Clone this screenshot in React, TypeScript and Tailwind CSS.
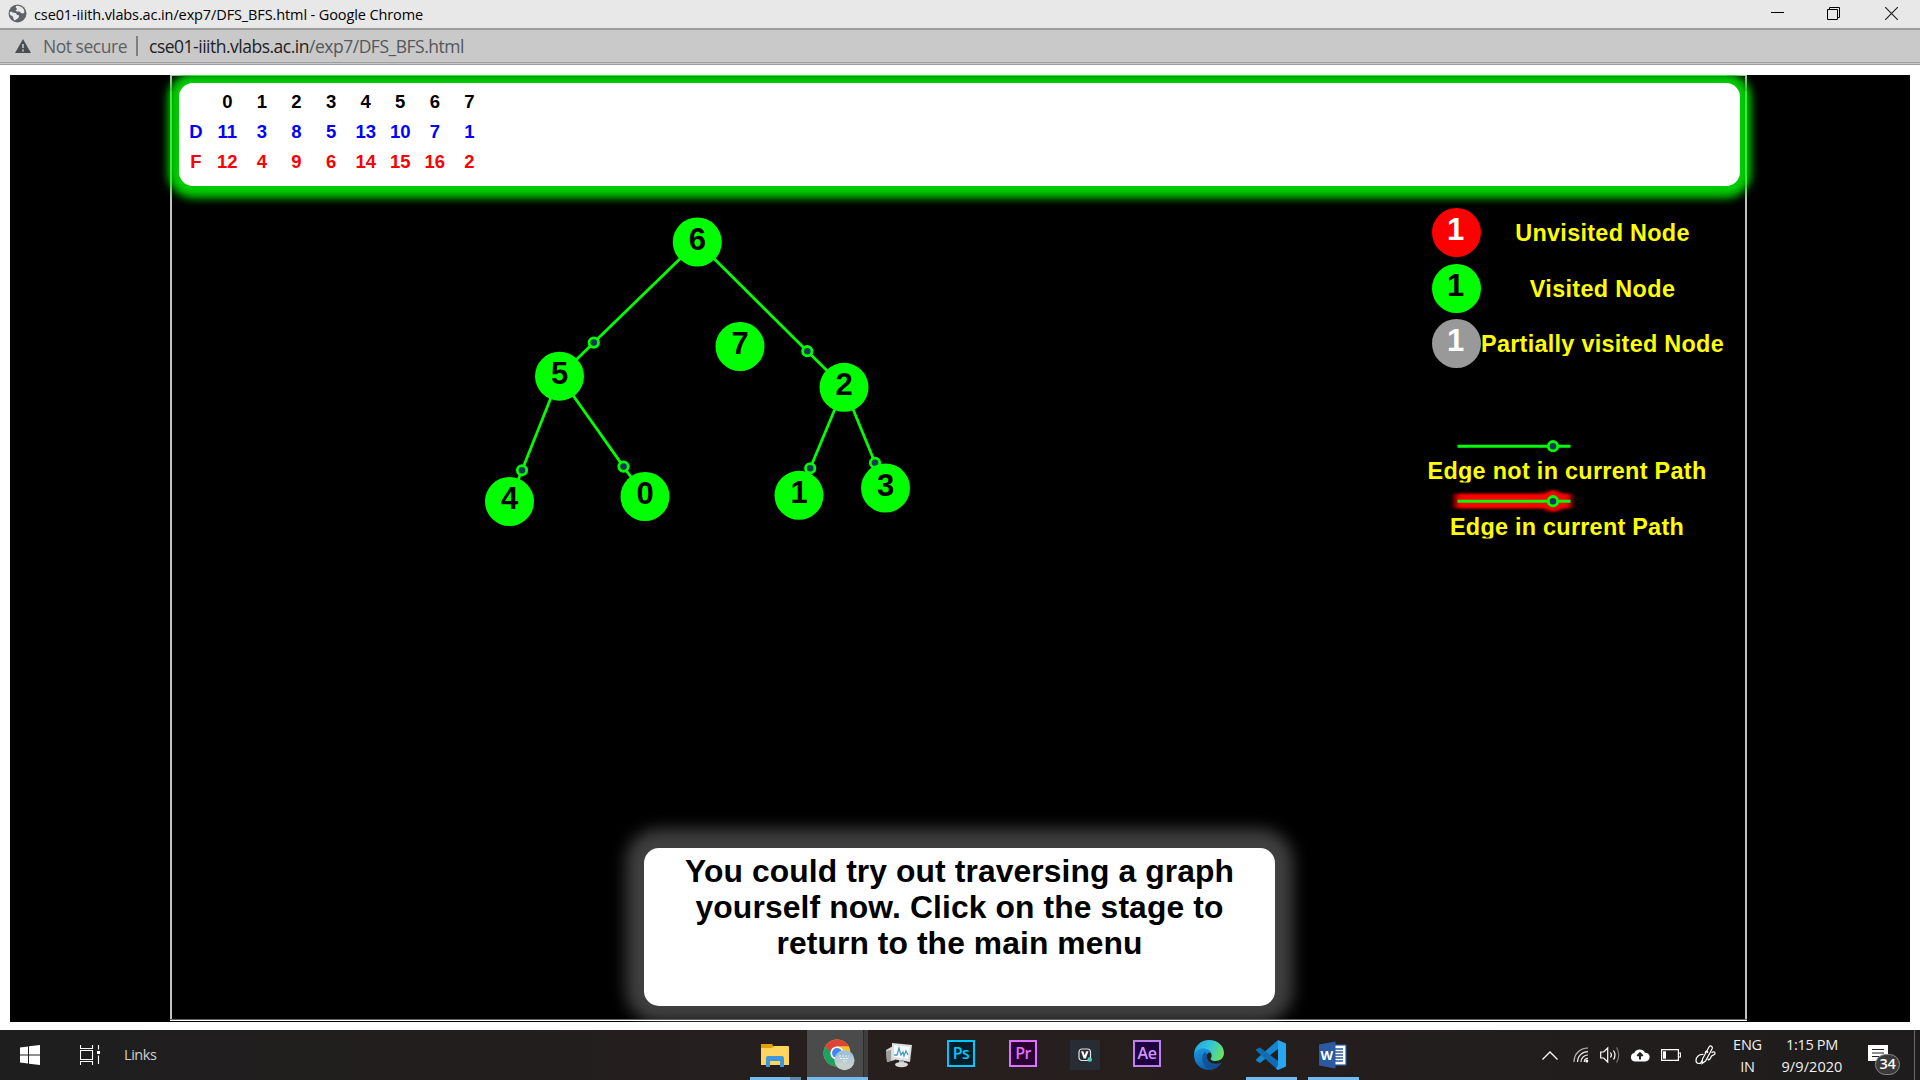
import { useLayoutEffect, useRef, useState, type ReactNode } from "react";

/* Text set to a fixed advance width by adjusting its tracking. */
function Fit({ w, className = "", children }: { w: number; className?: string; children: ReactNode }) {
  const ref = useRef<HTMLSpanElement>(null);
  const [ls, setLs] = useState(0);
  useLayoutEffect(() => {
    const el = ref.current;
    if (!el) return;
    const n = (el.textContent || "").length;
    setLs((w - el.getBoundingClientRect().width) / n);
  }, [w]);
  return (
    <span ref={ref} className={`inline-block whitespace-pre ${className}`} style={{ letterSpacing: `${ls}px` }}>
      {children}
    </span>
  );
}

const SEGOE = "font-['Open_Sans',sans-serif]";
const ARIAL = "font-['Liberation_Sans',Arial,sans-serif]";

const nodes = [
  { id: "6", x: 697.3, y: 242 },
  { id: "5", x: 559.5, y: 376.2 },
  { id: "7", x: 740, y: 346.5 },
  { id: "2", x: 844, y: 387.3 },
  { id: "4", x: 509.5, y: 501.5 },
  { id: "0", x: 645, y: 496.5 },
  { id: "1", x: 799, y: 495.3 },
  { id: "3", x: 885.5, y: 488 },
];
const edges = [
  { a: "6", b: "5", kx: 593.8, ky: 342.6 },
  { a: "6", b: "2", kx: 807.3, ky: 351.2 },
  { a: "5", b: "4", kx: 522, ky: 470.3 },
  { a: "5", b: "0", kx: 623.5, ky: 466.6 },
  { a: "2", b: "1", kx: 810.2, ky: 468.3 },
  { a: "2", b: "3", kx: 875, ky: 462.8 },
];
const byId = (id: string) => nodes.find((n) => n.id === id)!;

function Graph() {
  return (
    <svg className="block" width="440" height="320" viewBox="470 210 440 320">
      {edges.map((e) => (
        <g key={e.a + e.b} stroke="#00ff00">
          <line x1={byId(e.a).x} y1={byId(e.a).y} x2={e.kx} y2={e.ky} strokeWidth="2.8" />
          <line x1={e.kx} y1={e.ky} x2={byId(e.b).x} y2={byId(e.b).y} strokeWidth="2.8" />
          <circle cx={e.kx} cy={e.ky} r="4.7" fill="#123a56" strokeWidth="2.8" />
        </g>
      ))}
      {nodes.map((n) => (
        <g key={n.id}>
          <circle cx={n.x} cy={n.y} r="24.5" fill="#00ff00" />
          <text x={n.x} y={n.y + 7.7} textAnchor="middle" fontSize="31" fontWeight="700" fontFamily="Liberation Sans, Arial, sans-serif">
            {n.id}
          </text>
        </g>
      ))}
    </svg>
  );
}

function EdgeKey({ glow }: { glow?: boolean }) {
  return (
    <svg className="block" width="140" height="28" viewBox="0 0 140 28">
      {glow && (
        <g filter="url(#soft)" fill="#ff0000">
          <rect x="11" y="6.500" width="116" height="15" rx="2" />
          <circle cx="109" cy="14" r="11" />
        </g>
      )}
      <defs>
        <filter id="soft" x="-20%" y="-60%" width="140%" height="220%">
          <feGaussianBlur stdDeviation="3 1.2" />
        </filter>
      </defs>
      <path d="M13.500 14.300h113" stroke="#00ff00" strokeWidth="3" />
      <circle cx="109" cy="14.200" r="4.700" fill="#123a56" stroke="#00ff00" strokeWidth="2.800" />
    </svg>
  );
}

const legend = [
  { c: "bg-[#ff0000] text-white", t: "Unvisited Node", w: 174.5 },
  { c: "bg-[#00ff00] text-black", t: "Visited Node", w: 145.5 },
  { c: "bg-[#999999] text-white", t: "Partially visited Node", w: 243 },
];

function Legend() {
  return (
    <div className={`flex w-[300px] flex-col font-bold ${ARIAL}`}>
      {legend.map((l) => (
        <div key={l.t} className="flex h-[55.5px] items-start">
          <div className={`flex h-[49px] w-[49px] shrink-0 justify-center rounded-full text-[31px] leading-[44px] ${l.c}`}>
            <span className="-ml-px">1</span>
          </div>
          <div className="mt-[11px] flex h-[28px] w-[244px] justify-center text-[23.4px] leading-[28px] text-[#ffff00] [clip-path:inset(0_0_2px_0)]">
            <Fit w={l.w}>{l.t}</Fit>
          </div>
        </div>
      ))}
      <div className="mt-[57px] ml-[12px]">
        <EdgeKey />
      </div>
      <div className="-ml-[6px] flex h-[27px] w-[283px] justify-center text-[23.4px] leading-[22px] text-[#ffff00] [clip-path:inset(-3px_0_4px_0)]">
        <Fit w={279}>Edge not in current Path</Fit>
      </div>
      <div className="ml-[12px]">
        <EdgeKey glow />
      </div>
      <div className="-ml-[6px] flex h-[28px] w-[283px] justify-center text-[23.4px] leading-[24px] text-[#ffff00] [clip-path:inset(-3px_0_4px_0)]">
        <Fit w={234}>Edge in current Path</Fit>
      </div>
    </div>
  );
}

const rows = [
  { h: "", c: "text-black", v: [0, 1, 2, 3, 4, 5, 6, 7] },
  { h: "D", c: "text-[#0000ff]", v: [11, 3, 8, 5, 13, 10, 7, 1] },
  { h: "F", c: "text-[#ff0000]", v: [12, 4, 9, 6, 14, 15, 16, 2] },
];

function Stage() {
  return (
    <div className="relative ml-[160px] flex h-[946px] w-[1577px] flex-col">
      <div className="pointer-events-none absolute inset-x-0 top-0 h-[945px] border-x-2 border-t border-x-[#c0c0c0] border-t-[#c0c0c0]" />
      <div className="relative mt-[8px] ml-[9px] h-[102.5px] w-[1561px] rounded-[14px] bg-white pt-[3.500px] pl-[5.500px] shadow-[0_1px_8px_11px_#00cc00]">
        {rows.map((r, i) => (
          <div key={i} className={`flex h-[30px] items-center text-[18.5px] font-bold ${ARIAL} ${r.c}`}>
            <div className="mr-[2.5px] w-[23px] text-center">{r.h}</div>
            {r.v.map((v, k) => (
              <div key={k} className="w-[34.6px] text-center">
                {v}
              </div>
            ))}
          </div>
        ))}
      </div>
      <div className="pointer-events-none absolute top-[16px] left-0 h-[94px] w-full border-x-2 border-[#32f032]" />
      <div className="pointer-events-none absolute top-0 left-[20px] h-px w-[1537px] bg-[#32f032]" />
      <div className="relative flex justify-between pt-[22.500px] pl-[300px]">
        <div className="pt-[2px]">
          <Graph />
        </div>
        <div className="pr-[15.500px]">
          <Legend />
        </div>
      </div>
      <div
        className={`relative mt-auto mb-[15px] ml-[474px] h-[158px] w-[631px] rounded-[15px] bg-white pt-[4.500px] text-center text-[31.8px] leading-[36px] font-bold text-black shadow-[0_-1px_16px_18px_#404040] ${ARIAL}`}
      >
        <Fit w={549}>You could try out traversing a graph</Fit>
        <br />
        <Fit w={528}>yourself now. Click on the stage to</Fit>
        <br />
        <Fit w={366}>return to the main menu</Fit>
      </div>
      <div className="pointer-events-none absolute top-[944px] left-0 h-[2px] w-full border-t border-[#606060] bg-white" />
    </div>
  );
}

function Adobe({ t, c }: { t: string; c: string }) {
  return (
    <div className={`-mt-[3px] flex h-[27px] w-[28px] items-center justify-center border-2 text-[16px] leading-none font-semibold ${c}`}>
      <span className="-mt-px tracking-[-0.500px]">{t}</span>
    </div>
  );
}

const Explorer = () => (
  <svg width="28" height="26" viewBox="0 0 28 26">
    <path d="M0 2h11l2 3v4H0z" fill="#e3a008" />
    <path d="M0 6h11l2-2h14q1 0 1 1v18H0z" fill="#ffd55e" />
    <path d="M5 25V16q0-2 2-2h14q2 0 2 2v9h-4v-6H9v6z" fill="#3e97dc" />
  </svg>
);
const Chrome = () => (
  <svg className="ml-[2px]" width="32" height="32" viewBox="0 0 32 32">
    <circle cx="14" cy="14" r="13.500" fill="#fbc02d" />
    <path d="M14 14 2.300 7.200A13.500 13.500 0 0 0 14 27.500l6-10z" fill="#1fa15d" />
    <path d="M2.300 7.200A13.500 13.500 0 0 1 25.700 7.200H14l-6 6z" fill="#dc4437" />
    <circle cx="14" cy="14" r="6.600" fill="#fff" />
    <circle cx="14" cy="14" r="5" fill="#4285f4" />
    <circle cx="21.500" cy="21.300" r="10" fill="#b7ccd4" />
    <path d="M12.600 17a10 10 0 0 1 17.800 0q-9 3-17.800 0z" fill="#9fc3d4" />
    <path d="M16 17h10M17 19.500h8M20 22h4" stroke="#edf6fa" strokeWidth="1.200" strokeDasharray="2 1" />
    <path d="M12.500 25a10 10 0 0 0 18 0q-9-3-18 0z" fill="#c9cfc9" />
  </svg>
);
const Monitor = () => (
  <svg width="28" height="26" viewBox="0 0 28 26">
    <path d="M1 8l7-4 2 14-8 2z" fill="#d8d8d8" />
    <path d="M1 9l5-1v11l-4 1z" fill="#9d9d9d" />
    <path d="M7 1l20 2-2 17-18-3z" fill="#dedede" />
    <path d="M9 3l16 2-2 12-14-2z" fill="#f5fbff" />
    <path d="M9 13h3l2-7 2 7 2-3 1 4 2-5 2 4" fill="none" stroke="#4a9ac4" strokeWidth="1.300" />
    <path d="M14 18h5v3h-5z" fill="#aaa" />
    <ellipse cx="16.500" cy="22.600" rx="6.500" ry="2.600" fill="#dadada" />
  </svg>
);
const Badge = () => (
  <div className="flex h-[30px] w-[30px] items-center justify-center bg-[#282c35]">
    <svg width="16" height="16" viewBox="0 0 16 16">
      <rect x="2" y="2" width="11.500" height="11.500" rx="3" fill="none" stroke="#dfe3e3" strokeWidth="1.200" />
      <path d="M4 4.200h2.300l1.400 4 1.400-4h2.400L8.800 11.500H6.700z" fill="#fff" />
      <circle cx="12.700" cy="12.500" r="2.300" fill="#52d6c0" />
    </svg>
  </div>
);
const Edge = () => (
  <svg width="30" height="30" viewBox="0 0 30 30">
    <defs>
      <linearGradient id="eg" x1="0" y1="0.3" x2="1" y2="0.6">
        <stop offset="0" stopColor="#22a5e8" />
        <stop offset="0.5" stopColor="#34c6d6" />
        <stop offset="1" stopColor="#6be35a" />
      </linearGradient>
      <linearGradient id="eb" x1="0" y1="0" x2="0.6" y2="1">
        <stop offset="0" stopColor="#1b9de2" />
        <stop offset="1" stopColor="#0c59a4" />
      </linearGradient>
    </defs>
    <path d="M0 15C0 6 7 0 15 0c9 0 15 6 15 13 0 5-4 8-8.500 8-4 0-5.500-1.500-4.500-3 1.500-2 1-7-5-7.500C6 10 1 12 0 15z" fill="url(#eg)" />
    <path d="M0 15c1-5 6-7 10.500-6.500 4 .5 6 3 6.500 4-5-1-6.500 7 0 10.500 4 2 8 1 10.500-.5C25 27 20 30 15 30 6.500 30 0 23.500 0 15z" fill="url(#eb)" />
    <path d="M11 12c-4 3-4.500 13 4 17.900 5 0 10-3 12.600-7.600-8 4-16.600-1-14.600-7.800z" fill="#114a8b" opacity=".75" />
  </svg>
);
const VsCode = () => (
  <svg width="30" height="30" viewBox="0 0 30 30">
    <path d="M22 0v9L4 23l-3.500-2q-.8-1 0-2z" fill="#1585cc" />
    <path d="M22 30v-9L4 7.500 .5 9q-.8 1 0 2z" fill="#0f6db3" />
    <path d="M22 0l8 3.500v23L22 30l-2-1.500 2-3z" fill="#2aa5f0" />
  </svg>
);
const Word = () => (
  <svg width="28" height="28" viewBox="0 0 28 28">
    <rect x="13" y="4" width="14" height="20" fill="#fff" stroke="#2b579a" strokeWidth="1.200" />
    <path d="M16 8h8M16 11h8M16 14h8M16 17h8M16 20h8" stroke="#2b579a" strokeWidth="1.300" />
    <path d="M0 3.500L16.500 .5v27L0 24.500z" fill="#2b5aa3" />
    <text x="7.800" y="18.800" textAnchor="middle" fontSize="13" fontWeight="700" fill="#fff" fontFamily="Open Sans, sans-serif">
      W
    </text>
  </svg>
);

const apps = [
  { k: "explorer", el: <Explorer />, bar: "open" },
  { k: "chrome", el: <Chrome />, bar: "active" },
  { k: "monitor", el: <Monitor /> },
  { k: "ps", el: <Adobe t="Ps" c="border-[#00c8ff] bg-[#001d2a] text-[#00c8ff]" /> },
  { k: "pr", el: <Adobe t="Pr" c="border-[#e070ff] bg-[#2a0033] text-[#e070ff]" /> },
  { k: "badge", el: <Badge /> },
  { k: "ae", el: <Adobe t="Ae" c="border-[#c080f0] bg-[#1f003f] text-[#cf96fd]" /> },
  { k: "edge", el: <Edge /> },
  { k: "code", el: <VsCode />, bar: "run" },
  { k: "word", el: <Word />, bar: "run" },
];

function Taskbar() {
  return (
    <div className={`flex h-[50px] w-full bg-linear-to-r from-[#1e1e1e] via-[#271f1e] to-[#1e1c1c] text-[#f0f0f0] ${SEGOE}`}>
      <div className="flex w-[744px] items-center">
        <svg className="ml-[20px]" width="20" height="20" viewBox="0 0 20 20" fill="#fff">
          <path d="M0 2.500l8-1.100v8.200H0zM9 1.200L20 0v9.600H9zM0 10.500h8v8.100l-8-1.100zM9 10.500h11V20L9 18.800z" />
        </svg>
        <svg className="ml-[40px]" width="20" height="20" viewBox="0 0 20 20" fill="none" stroke="#fff" strokeWidth="1.100">
          <path d="M.5 0v3.500h12V0M.5 20v-3.500h12V20M.5 5.500h12v9H.500zM18.500 0v4.500M18.500 10.500V19" />
          <path d="M17 6h3v3h-3z" fill="#fff" stroke="none" />
        </svg>
        <span className="ml-[24px] text-[14.500px] text-[#d0d0d0]">
          <Fit w={32.500}>Links</Fit>
        </span>
      </div>
      {apps.map((a) => (
        <div
          key={a.k}
          className={`relative flex w-[62px] items-center justify-center ${a.k === "chrome" ? "border-l border-l-[#201d1d] bg-[#4b4b4b]" : ""}`}
        >
          {a.el}
          {a.bar === "open" && (
            <div className="absolute bottom-0 left-[6px] flex h-[3px] w-[51px]">
              <div className="w-[40px] bg-[#76b9ed]" />
              <div className="w-[11px] bg-[#5c88ab]" />
            </div>
          )}
          {a.bar === "active" && (
            <>
              <div className="absolute top-0 right-0 h-full w-[5px] border-l border-[#2a2a2a] bg-[#3e3e3e]" />
              <div className="absolute bottom-0 left-0 h-[3px] w-full bg-[#76b9ed]" />
            </>
          )}
          {a.bar === "run" && <div className="absolute bottom-0 left-[6px] h-[3px] w-[51px] bg-[#76b9ed]" />}
        </div>
      ))}
      <div className="flex flex-1 items-center pl-[178px]">
        <svg width="16" height="9" viewBox="0 0 16 9" fill="none" stroke="#fff" strokeWidth="1.300">
          <path d="M.5 8.500L8 1l7.500 7.500" />
        </svg>
        <svg className="ml-[15px]" width="16" height="16" viewBox="0 0 16 16" fill="none" stroke="#e8e8e8" strokeWidth="1.200">
          <path d="M1 15C1 7 7 1 15 1" stroke="#bbb" />
          <path d="M4.500 15C4.500 9 9 4.700 15 4.700M8 15c0-4 3-7 7-7M11.300 15c0-2 1.600-3.600 3.700-3.600" />
          <circle cx="13.800" cy="14" r="1.500" fill="#fff" stroke="none" />
        </svg>
        <svg className="ml-[11px]" width="21" height="18" viewBox="0 0 21 18" fill="none" stroke="#fff" strokeWidth="1.200">
          <path d="M.7 6h3l4-4v14l-4-4h-3z" />
          <path d="M10.500 6.500q1.800 2.500 0 5M13.500 4.500q3 4.500 0 9" />
          <path d="M16.500 1.500q4.500 7.500 0 15" stroke="#777" />
        </svg>
        <svg className="ml-[9px]" width="20" height="14" viewBox="0 0 20 14">
          <path d="M4.500 13.500a4.300 4.300 0 0 1-.3-8.400A6 6 0 0 1 15 4.700a4.400 4.400 0 0 1 .5 8.800z" fill="#fff" />
          <path d="M10 11.500V6M7.300 8L10 5.200 12.700 8" fill="none" stroke="#222" strokeWidth="2" />
        </svg>
        <svg className="ml-[11px]" width="20" height="12" viewBox="0 0 20 12">
          <path d="M.6.600h16.800v10.800H.6zM18 4h1.500v4H18" fill="none" stroke="#fff" strokeWidth="1.200" />
          <path d="M2 2.300h3v7.400H2z" fill="#fff" />
        </svg>
        <svg className="ml-[14px]" width="21" height="20" viewBox="0 0 21 20" fill="none" stroke="#fff" strokeWidth="1.200">
          <path d="M7.500 14L14 2q1.200-1.600 2.500-.7T17 4l-6.500 12-3.500 2.500z" />
          <path d="M8.500 9.500C4 9 1 12 1 15.500S6 20 7 15.500M10 8c1-2.500 3-2.500 2.500 0M13 13.500c0 2.500 2 1.500 3-1.500s4-1.500 4-3.500-1.500-2-3.500-1" />
        </svg>
        <div className="mt-[1px] ml-[17px] flex w-[29px] flex-col items-center text-[14.500px] leading-[22px]">
          <Fit w={29}>ENG</Fit>
          <Fit w={14.500}>IN</Fit>
        </div>
        <div className="mt-[1px] ml-[19px] flex w-[62px] flex-col items-center text-[14.500px] leading-[22px]">
          <Fit w={52}>1:15 PM</Fit>
          <Fit w={61}>9/9/2020</Fit>
        </div>
        <div className="relative mt-[10px] ml-[25px] h-[30px] w-[32px]">
          <svg width="20" height="20" viewBox="0 0 20 20">
            <path d="M0 0h20v16h-7l-4 4v-4H0z" fill="#fff" />
            <path d="M4 4.500h12M4 8h12M4 11.500h7" stroke="#222" strokeWidth="1.200" />
          </svg>
          <div className="absolute top-[9px] left-[7px] flex h-[21px] w-[25px] items-center justify-center rounded-full border border-[#8a8a8a] bg-[#3b3a3a] text-[14.500px] leading-none font-semibold tracking-[-0.300px] text-white">
            34
          </div>
        </div>
        <div className="ml-auto h-full w-[6px] border-l border-[#6a6a6a]" />
      </div>
    </div>
  );
}

export default function App() {
  return (
    <div className="flex h-[1080px] w-[1920px] flex-col overflow-hidden bg-white">
      <div className={`flex h-[30px] items-center border-b-2 border-[#9d9d9d] bg-[#e8e8e8] pl-[8px] text-[14.500px] text-black ${SEGOE}`}>
        <svg className="-mt-px" width="19" height="19" viewBox="0 0 19 19">
          <circle cx="9.500" cy="9.500" r="9" fill="#5f6368" />
          <path d="M2 8c2-1 3 1 5 1s1 2 3 2 1 3-1 4-2 2-3 1 0-3-2-4-3-2-2-4zM8 2c-1 2 1 2 1 3s-2 1-1 2 3 0 4 1 2 2 4 1c2-3-3-8-8-7z" fill="#e8e8e8" />
        </svg>
        <span className="mt-px ml-[7px]">
          <Fit w={389}>cse01-iiith.vlabs.ac.in/exp7/DFS_BFS.html - Google Chrome</Fit>
        </span>
        <svg className="-mt-px ml-auto" width="13" height="13" viewBox="0 0 13 13">
          <path d="M0 5.500h13" stroke="#000" />
        </svg>
        <svg className="-mt-px ml-[43px]" width="13" height="13" viewBox="0 0 13 13" fill="none" stroke="#000">
          <path d="M.5 2.500h10v10H.5zM2.500 2.500v-2h10v10h-2" />
        </svg>
        <svg className="-mt-px mr-[22px] ml-[45px]" width="13" height="13" viewBox="0 0 13 13" stroke="#222" strokeWidth="1.200">
          <path d="M0 0l13 13M13 0L0 13" />
        </svg>
      </div>
      <div className={`flex h-[35px] items-center border-b border-[#9d9d9d] bg-[#c9c9c9] text-[17.500px] ${SEGOE}`}>
        <div className="flex h-[34px] w-full items-center border-b border-[#c9c9c9]">
          <div className="flex h-[33px] w-full items-center border-b border-[#9d9d9d] pl-[15px]">
            <svg width="16" height="14" viewBox="0 0 16 14">
              <path d="M8 0l8 14H0z" fill="#4b4e51" />
              <path d="M8 5v4M8 10.500v2" stroke="#c9c9c9" strokeWidth="1.600" />
            </svg>
            <span className="ml-[12px] text-[#5c5f63]">
              <Fit w={84}>Not secure</Fit>
            </span>
            <div className="ml-[9px] h-[20px] w-[2px] bg-[#808080]" />
            <span className="ml-[11px] text-[#202124]">
              <Fit w={160}>cse01-iiith.vlabs.ac.in</Fit>
            </span>
            <span className="text-[#54575b]">
              <Fit w={155}>/exp7/DFS_BFS.html</Fit>
            </span>
          </div>
        </div>
      </div>
      <div className="mx-[10px] mt-[10px] mb-[8px] h-[947px] overflow-hidden bg-black">
        <Stage />
      </div>
      <Taskbar />
    </div>
  );
}
